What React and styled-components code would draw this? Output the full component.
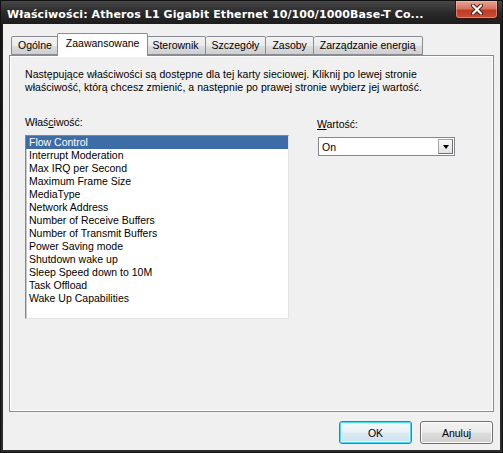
import styled, { createGlobalStyle } from "styled-components";

const GlobalStyle = createGlobalStyle`
    html, body {
        margin: 0;
        padding: 0;
        overflow: hidden;
        background: #f0f0f0;
    }
    body {
        font-family: "Liberation Sans", Arial, sans-serif;
        font-size: 10.5px;
        color: #000;
    }
`;

const Window = styled.div`
    width: 503px;
    height: 453px;
    box-sizing: border-box;
    border: 1px solid #111;
    background: linear-gradient(#474747 0px, #2a2a2a 12px, #1b1b1b 24px, #2c2c2c 100%);
    display: flex;
    flex-direction: column;
`;

const TitleBar = styled.div`
    height: 23px;
    flex: none;
    display: flex;
    align-items: flex-start;
    justify-content: space-between;
    padding: 0 4px 0 6px;
`;

const Title = styled.div`
    font-family: "DejaVu Sans", Verdana, sans-serif;
    font-weight: bold;
    font-size: 11px;
    line-height: 24px;
    padding-top: 2px;
    color: #fff;
    white-space: nowrap;
    letter-spacing: 0.1px;
`;

const CloseButton = styled.div`
    width: 43px;
    height: 18px;
    box-sizing: border-box;
    border: 1px solid #3a1410;
    border-top: none;
    border-radius: 0 0 4px 4px;
    background: linear-gradient(#e6a594 0%, #d8735e 45%, #bf3b25 55%, #c9503a 100%);
    box-shadow: inset 0 0 0 1px rgba(255, 200, 190, 0.45);
    display: flex;
    align-items: center;
    justify-content: center;
`;

const Body = styled.div`
    flex: 1;
    margin: 0 2px 2px;
    background: #f0f0f0;
    padding: 9px 6px 6px;
    display: flex;
    flex-direction: column;
`;

const TabRow = styled.div`
    height: 22px;
    display: flex;
    align-items: flex-end;
    padding-left: 2px;
    position: relative;
    z-index: 1;
`;

const Tab = styled.div`
    box-sizing: border-box;
    height: ${p => (p.$active ? "23px" : "19px")};
    margin: ${p => (p.$active ? "0 -2px -1px" : "0")};
    padding: ${p => (p.$active ? "0 8px" : "0 6px")};
    border: 1px solid #898c95;
    border-bottom: ${p => (p.$active ? "none" : "1px solid #898c95")};
    border-left: ${p => (p.$first || p.$active ? "1px solid #898c95" : "none")};
    border-radius: 2px 2px 0 0;
    background: ${p => (p.$active ? "#fff" : "linear-gradient(#f2f2f2, #ebebeb 50%, #dddddd 51%, #cfcfcf)")};
    line-height: ${p => (p.$active ? "19px" : "17px")};
    white-space: nowrap;
    position: relative;
    z-index: ${p => (p.$active ? 2 : 0)};
`;

const Panel = styled.div`
    height: 357px;
    box-sizing: border-box;
    border: 1px solid #898c95;
    background: #f0f0f0;
    box-shadow: inset 1px 1px 0 #fff, inset -1px -1px 0 #fff;
    padding: 12px 15px;
`;

const Description = styled.p`
    margin: 0;
    line-height: 13px;
    letter-spacing: 0.05px;
`;

const Columns = styled.div`
    display: flex;
    gap: 28px;
    margin-top: 22px;
`;

const Column = styled.div`
    width: ${p => p.$width}px;
    display: flex;
    flex-direction: column;
`;

const Label = styled.div`
    line-height: 13px;
    height: 13px;
    margin-top: ${p => p.$offset || 0}px;
    margin-bottom: 6px;
    u {
        text-decoration: underline;
        text-underline-offset: 1px;
    }
`;

const ListBox = styled.ul`
    list-style: none;
    margin: 0;
    padding: 0;
    height: 184px;
    box-sizing: border-box;
    background: #fff;
    border: 1px solid;
    border-color: #828790 #e3e3e3 #e3e3e3 #828790;
    box-shadow: inset 1px 1px 0 #c9c9c9;
`;

const Item = styled.li`
    height: 13px;
    line-height: 13px;
    padding-left: 3px;
    color: ${p => (p.$selected ? "#fff" : "#000")};
    background: ${p => (p.$selected ? "#3d6ca6" : "transparent")};
    white-space: nowrap;
`;

const Select = styled.div`
    height: 19px;
    box-sizing: border-box;
    border: 1px solid #828790;
    background: #fff;
    display: flex;
    align-items: center;
    justify-content: space-between;
    padding: 0 1px 0 3px;
    margin-left: 1px;
`;

const DropButton = styled.div`
    width: 15px;
    height: 15px;
    box-sizing: border-box;
    border: 1px solid #a3a3a3;
    border-right-color: #6f6f6f;
    border-bottom-color: #6f6f6f;
    background: linear-gradient(#fafafa, #e2e2e2);
    display: flex;
    align-items: center;
    justify-content: center;
`;

const Arrow = styled.span`
    width: 0;
    height: 0;
    border-left: 3.5px solid transparent;
    border-right: 3.5px solid transparent;
    border-top: 4px solid #000;
    margin-top: 1px;
`;

const ButtonRow = styled.div`
    display: flex;
    justify-content: flex-end;
    gap: 8px;
    margin-top: 9px;
    padding-right: 1px;
`;

const Button = styled.button`
    width: 73px;
    height: 23px;
    box-sizing: border-box;
    font: inherit;
    color: #000;
    border: 1px solid ${p => (p.$default ? "#3c7fb1" : "#707070")};
    border-radius: 3px;
    background: ${p => (p.$default
        ? "linear-gradient(#f4f9fc 0%, #eaf3f9 48%, #dbe9f3 52%, #cfe1ee 100%)"
        : "linear-gradient(#f2f2f2 0%, #ebebeb 48%, #dddddd 52%, #cfcfcf 100%)")};
    box-shadow: ${p => (p.$default ? "inset 0 0 0 1px #48d9f4, inset 0 0 0 2px #e6f8fd" : "inset 0 0 0 1px #fcfcfc")};
    padding: 0;
`;

const tabs = ["Ogólne", "Zaawansowane", "Sterownik", "Szczegóły", "Zasoby", "Zarządzanie energią"];

const properties = [
    "Flow Control",
    "Interrupt Moderation",
    "Max IRQ per Second",
    "Maximum Frame Size",
    "MediaType",
    "Network Address",
    "Number of Receive Buffers",
    "Number of Transmit Buffers",
    "Power Saving mode",
    "Shutdown wake up",
    "Sleep Speed down to 10M",
    "Task Offload",
    "Wake Up Capabilities",
];

const CloseIcon = () => (
    <svg width="14" height="11" viewBox="0 0 14 11">
        <path d="M3 1.5 L11 9.5 M11 1.5 L3 9.5" stroke="#4a1a12" strokeWidth="4" strokeLinecap="round" />
        <path d="M3 1.5 L11 9.5 M11 1.5 L3 9.5" stroke="#fff" strokeWidth="2.2" strokeLinecap="round" />
    </svg>
);

const App = () => {
    return (
        <>
            <GlobalStyle />
            <Window>
                <TitleBar>
                    <Title>Właściwości: Atheros L1 Gigabit Ethernet 10/100/1000Base-T Co...</Title>
                    <CloseButton>
                        <CloseIcon />
                    </CloseButton>
                </TitleBar>
                <Body>
                    <TabRow>
                        {tabs.map((t, i) => (
                            <Tab key={t} $active={i === 1} $first={i === 0}>{t}</Tab>
                        ))}
                    </TabRow>
                    <Panel>
                        <Description>
                            Następujące właściwości są dostępne dla tej karty sieciowej. Kliknij po lewej stronie
                            <br />
                            właściwość, którą chcesz zmienić, a następnie po prawej stronie wybierz jej wartość.
                        </Description>
                        <Columns>
                            <Column $width={264}>
                                <Label>Właś<u>c</u>iwość:</Label>
                                <ListBox>
                                    {properties.map((p, i) => (
                                        <Item key={p} $selected={i === 0}>{p}</Item>
                                    ))}
                                </ListBox>
                            </Column>
                            <Column $width={138}>
                                <Label $offset={2}><u>W</u>artość:</Label>
                                <Select>
                                    <span>On</span>
                                    <DropButton><Arrow /></DropButton>
                                </Select>
                            </Column>
                        </Columns>
                    </Panel>
                    <ButtonRow>
                        <Button $default>OK</Button>
                        <Button>Anuluj</Button>
                    </ButtonRow>
                </Body>
            </Window>
        </>
    );
};

export default App;
